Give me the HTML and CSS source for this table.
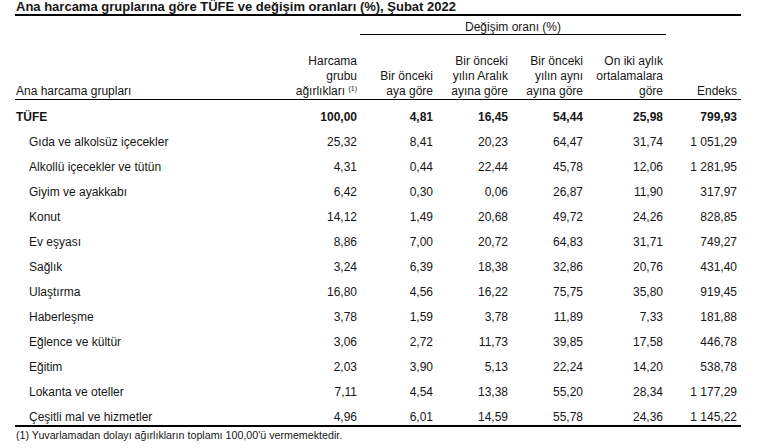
FILE: index.html
```html
<!DOCTYPE html>
<html lang="tr">
<head>
<meta charset="utf-8">
<title>TÜFE</title>
<link rel="stylesheet" href="styles.css">
</head>
<body>
<div class="report">
  <div class="title">Ana harcama gruplarına göre TÜFE ve değişim oranları (%), Şubat 2022</div>
  <table class="cpi">
    <colgroup>
      <col class="c-label"><col class="c-w"><col class="c-2"><col class="c-3"><col class="c-4"><col class="c-5"><col class="c-6">
    </colgroup>
    <thead>
      <tr class="h1">
        <th></th><th></th>
        <th colspan="4" class="group">Değişim oranı (%)</th>
        <th></th>
      </tr>
      <tr class="h2">
        <th class="lbl">Ana harcama grupları</th>
        <th>Harcama<br>grubu<br>ağırlıkları <sup>(1)</sup></th>
        <th>Bir önceki<br>aya göre</th>
        <th>Bir önceki<br>yılın Aralık<br>ayına göre</th>
        <th>Bir önceki<br>yılın aynı<br>ayına göre</th>
        <th>On iki aylık<br>ortalamalara<br>göre</th>
        <th class="last">Endeks</th>
      </tr>
    </thead>
    <tbody>
      <tr class="total"><td class="lbl">TÜFE</td><td>100,00</td><td>4,81</td><td>16,45</td><td>54,44</td><td>25,98</td><td class="last">799,93</td></tr>
      <tr><td class="lbl sub">Gıda ve alkolsüz içecekler</td><td>25,32</td><td>8,41</td><td>20,23</td><td>64,47</td><td>31,74</td><td class="last">1 051,29</td></tr>
      <tr><td class="lbl sub">Alkollü içecekler ve tütün</td><td>4,31</td><td>0,44</td><td>22,44</td><td>45,78</td><td>12,06</td><td class="last">1 281,95</td></tr>
      <tr><td class="lbl sub">Giyim ve ayakkabı</td><td>6,42</td><td>0,30</td><td>0,06</td><td>26,87</td><td>11,90</td><td class="last">317,97</td></tr>
      <tr><td class="lbl sub">Konut</td><td>14,12</td><td>1,49</td><td>20,68</td><td>49,72</td><td>24,26</td><td class="last">828,85</td></tr>
      <tr><td class="lbl sub">Ev eşyası</td><td>8,86</td><td>7,00</td><td>20,72</td><td>64,83</td><td>31,71</td><td class="last">749,27</td></tr>
      <tr><td class="lbl sub">Sağlık</td><td>3,24</td><td>6,39</td><td>18,38</td><td>32,86</td><td>20,76</td><td class="last">431,40</td></tr>
      <tr><td class="lbl sub">Ulaştırma</td><td>16,80</td><td>4,56</td><td>16,22</td><td>75,75</td><td>35,80</td><td class="last">919,45</td></tr>
      <tr><td class="lbl sub">Haberleşme</td><td>3,78</td><td>1,59</td><td>3,78</td><td>11,89</td><td>7,33</td><td class="last">181,88</td></tr>
      <tr><td class="lbl sub">Eğlence ve kültür</td><td>3,06</td><td>2,72</td><td>11,73</td><td>39,85</td><td>17,58</td><td class="last">446,78</td></tr>
      <tr><td class="lbl sub">Eğitim</td><td>2,03</td><td>3,90</td><td>5,13</td><td>22,24</td><td>14,20</td><td class="last">538,78</td></tr>
      <tr><td class="lbl sub">Lokanta ve oteller</td><td>7,11</td><td>4,54</td><td>13,38</td><td>55,20</td><td>28,34</td><td class="last">1 177,29</td></tr>
      <tr class="end"><td class="lbl sub">Çeşitli mal ve hizmetler</td><td>4,96</td><td>6,01</td><td>14,59</td><td>55,78</td><td>24,36</td><td class="last">1 145,22</td></tr>
    </tbody>
  </table>
  <div class="note">(1) Yuvarlamadan dolayı ağırlıkların toplamı 100,00'ü vermemektedir.</div>
</div>
</body>
</html>
```

FILE: styles.css
```css
html, body {
  margin: 0;
  padding: 0;
  background: #ffffff;
}

body {
  font-family: "Liberation Sans", Arial, sans-serif;
  color: #161616;
}

.report {
  width: 726px;
  margin-left: 15px;
}

.title {
  font-size: 13px;
  font-weight: bold;
  line-height: 14px;
  padding-left: 1px;
  border-bottom: 2px solid #000;
  white-space: nowrap;
}

.cpi {
  width: 726px;
  table-layout: fixed;
  border-collapse: separate;
  border-spacing: 0;
  font-size: 12px;
}

.c-label { width: 275px; }
.c-w { width: 70px; }
.c-2 { width: 76px; }
.c-3 { width: 75px; }
.c-4 { width: 75px; }
.c-5 { width: 80px; }
.c-6 { width: 75px; }

.cpi th,
.cpi td {
  padding: 0 3px 0 0;
  text-align: right;
  font-weight: normal;
  white-space: nowrap;
}

.cpi .last { padding-right: 4px; }

.cpi .lbl {
  text-align: left;
  padding-left: 1px;
}

.cpi .sub { padding-left: 14px; }

.h1 th {
  padding-top: 4px;
  line-height: 14px;
  vertical-align: bottom;
}

.h1 th.group {
  text-align: center;
  border-bottom: 1px solid #000;
  padding-right: 0;
}

.h2 th {
  padding-top: 19px;
  line-height: 15px;
  vertical-align: bottom;
  border-bottom: 1px solid #000;
}

.h2 sup {
  font-size: 7px;
  line-height: 0;
  vertical-align: 4px;
}

.cpi td {
  padding-top: 10px;
  line-height: 15px;
}

.total td { font-weight: bold; }

.end td { border-bottom: 2px solid #000; }

.note {
  font-size: 10.7px;
  line-height: 13px;
  padding-top: 2px;
  padding-left: 1px;
}
```
